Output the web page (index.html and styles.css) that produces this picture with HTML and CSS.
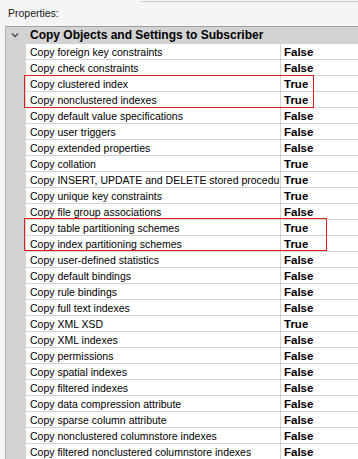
FILE: index.html
```html
<!DOCTYPE html>
<html>
<head>
<meta charset="utf-8">
<title>Properties</title>
<link rel="stylesheet" href="styles.css">
</head>
<body>
<div class="topbar"><div class="topbox"></div></div>
<div class="label">Properties:</div>
<div class="grid">
	<div class="head">
		<svg class="chev" width="8" height="6" viewBox="0 0 8 6"><path d="M1 1.5 L4 4.5 L7 1.5" fill="none" stroke="#444" stroke-width="1.3"/></svg>
		<span>Copy Objects and Settings to Subscriber</span>
	</div>
	<div class="row"><div class="gut"></div><div class="name">Copy foreign key constraints</div><div class="val">False</div></div>
	<div class="row"><div class="gut"></div><div class="name">Copy check constraints</div><div class="val">False</div></div>
	<div class="row"><div class="gut"></div><div class="name">Copy clustered index</div><div class="val">True</div></div>
	<div class="row"><div class="gut"></div><div class="name">Copy nonclustered indexes</div><div class="val">True</div></div>
	<div class="row"><div class="gut"></div><div class="name">Copy default value specifications</div><div class="val">False</div></div>
	<div class="row"><div class="gut"></div><div class="name">Copy user triggers</div><div class="val">False</div></div>
	<div class="row"><div class="gut"></div><div class="name">Copy extended properties</div><div class="val">False</div></div>
	<div class="row"><div class="gut"></div><div class="name">Copy collation</div><div class="val">True</div></div>
	<div class="row"><div class="gut"></div><div class="name">Copy INSERT, UPDATE and DELETE stored procedures</div><div class="val">True</div></div>
	<div class="row"><div class="gut"></div><div class="name">Copy unique key constraints</div><div class="val">True</div></div>
	<div class="row"><div class="gut"></div><div class="name">Copy file group associations</div><div class="val">False</div></div>
	<div class="row"><div class="gut"></div><div class="name">Copy table partitioning schemes</div><div class="val">True</div></div>
	<div class="row"><div class="gut"></div><div class="name">Copy index partitioning schemes</div><div class="val">True</div></div>
	<div class="row"><div class="gut"></div><div class="name">Copy user-defined statistics</div><div class="val">False</div></div>
	<div class="row"><div class="gut"></div><div class="name">Copy default bindings</div><div class="val">False</div></div>
	<div class="row"><div class="gut"></div><div class="name">Copy rule bindings</div><div class="val">False</div></div>
	<div class="row"><div class="gut"></div><div class="name">Copy full text indexes</div><div class="val">False</div></div>
	<div class="row"><div class="gut"></div><div class="name">Copy XML XSD</div><div class="val">True</div></div>
	<div class="row"><div class="gut"></div><div class="name">Copy XML indexes</div><div class="val">False</div></div>
	<div class="row"><div class="gut"></div><div class="name">Copy permissions</div><div class="val">False</div></div>
	<div class="row"><div class="gut"></div><div class="name">Copy spatial indexes</div><div class="val">False</div></div>
	<div class="row"><div class="gut"></div><div class="name">Copy filtered indexes</div><div class="val">False</div></div>
	<div class="row"><div class="gut"></div><div class="name">Copy data compression attribute</div><div class="val">False</div></div>
	<div class="row"><div class="gut"></div><div class="name">Copy sparse column attribute</div><div class="val">False</div></div>
	<div class="row"><div class="gut"></div><div class="name">Copy nonclustered columnstore indexes</div><div class="val">False</div></div>
	<div class="row"><div class="gut"></div><div class="name">Copy filtered nonclustered columnstore indexes</div><div class="val">False</div></div>
	<div class="mark mark1"></div>
	<div class="mark mark2"></div>
</div>
</body>
</html>
```

FILE: styles.css
```css
html, body {margin:0;padding:0;background:#f5f5f5;height:100%;overflow:hidden;}
body {font-family:"Liberation Sans", Arial, sans-serif;color:#000;}
.topbar {height:2px;}
.topbox {margin-left:141px;height:1px;border-bottom:1px solid #c8c8c8;}
.label {height:24px;line-height:22px;padding-left:8px;font-size:10.5px;color:#1a1a1a;}
.grid {position:relative;margin-left:5px;border-top:1px solid #a0a0a0;border-left:1px solid #b4b4b4;}
.head {height:16px;background:#d3d3d3;display:flex;align-items:center;font-weight:bold;font-size:12px;}
.head .chev {margin:0 11px 1px 5px;}
.row {display:flex;height:16px;}
.gut {width:20px;flex:none;background:#d3d3d3;}
.name {width:250px;flex:none;padding:1px 0 0 4px;background:#fff;border-top:1px solid #d3d3d3;font-size:10.5px;line-height:14px;white-space:nowrap;overflow:hidden;}
.val {flex:1;padding:1px 0 0 3px;background:#fff;border-top:1px solid #d3d3d3;border-left:1px solid #d3d3d3;font-weight:bold;font-size:11.5px;line-height:14px;}
.mark {position:absolute;border:1px solid #e02020;}
.mark1 {left:18px;top:48px;width:288px;height:31px;}
.mark2 {left:18px;top:191px;width:301px;height:31px;}
```
